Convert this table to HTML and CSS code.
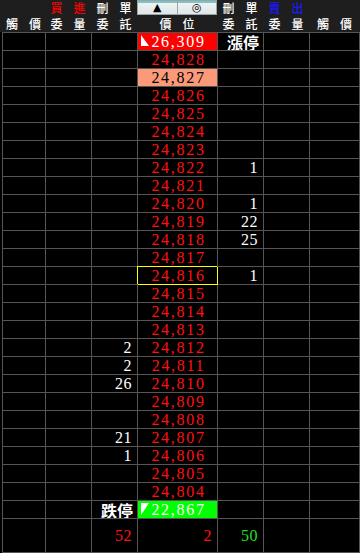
FILE: index.html
```html
<!DOCTYPE html>
<html lang="zh-Hant">
<head>
<meta charset="utf-8">
<title>五檔報價</title>
<link rel="stylesheet" href="styles.css">
</head>
<body>
<div class="screen">
  <div class="head">
    <div class="h"></div>
    <div class="h red"><span>買</span><span>進</span></div>
    <div class="h"><span>刪</span><span>單</span></div>
    <div class="h btns"><span class="btn">▲</span><span class="btn">◎</span></div>
    <div class="h"><span>刪</span><span>單</span></div>
    <div class="h blue"><span>賣</span><span>出</span></div>
    <div class="h"></div>
    <div class="h"><span>觸</span><span>價</span></div>
    <div class="h"><span>委</span><span>量</span></div>
    <div class="h"><span>委</span><span>託</span></div>
    <div class="h"><span>價</span><span>位</span></div>
    <div class="h"><span>委</span><span>託</span></div>
    <div class="h"><span>委</span><span>量</span></div>
    <div class="h"><span>觸</span><span>價</span></div>
  </div>
  <div class="book">
    <div class="row"><span class="c"></span><span class="c"></span><span class="c"></span><span class="c p up"><svg class="tri" width="8" height="11" viewBox="0 0 8 11"><polygon points="0,0 0,11 8,11" fill="#fff"/></svg>26,309</span><span class="c lim">漲停</span><span class="c"></span><span class="c"></span></div>
    <div class="row"><span class="c"></span><span class="c"></span><span class="c"></span><span class="c p">24,828</span><span class="c"></span><span class="c"></span><span class="c"></span></div>
    <div class="row"><span class="c"></span><span class="c"></span><span class="c"></span><span class="c p ref">24,827</span><span class="c"></span><span class="c"></span><span class="c"></span></div>
    <div class="row"><span class="c"></span><span class="c"></span><span class="c"></span><span class="c p">24,826</span><span class="c"></span><span class="c"></span><span class="c"></span></div>
    <div class="row"><span class="c"></span><span class="c"></span><span class="c"></span><span class="c p">24,825</span><span class="c"></span><span class="c"></span><span class="c"></span></div>
    <div class="row"><span class="c"></span><span class="c"></span><span class="c"></span><span class="c p">24,824</span><span class="c"></span><span class="c"></span><span class="c"></span></div>
    <div class="row"><span class="c"></span><span class="c"></span><span class="c"></span><span class="c p">24,823</span><span class="c"></span><span class="c"></span><span class="c"></span></div>
    <div class="row"><span class="c"></span><span class="c"></span><span class="c"></span><span class="c p">24,822</span><span class="c">1</span><span class="c"></span><span class="c"></span></div>
    <div class="row"><span class="c"></span><span class="c"></span><span class="c"></span><span class="c p">24,821</span><span class="c"></span><span class="c"></span><span class="c"></span></div>
    <div class="row"><span class="c"></span><span class="c"></span><span class="c"></span><span class="c p">24,820</span><span class="c">1</span><span class="c"></span><span class="c"></span></div>
    <div class="row"><span class="c"></span><span class="c"></span><span class="c"></span><span class="c p">24,819</span><span class="c">22</span><span class="c"></span><span class="c"></span></div>
    <div class="row"><span class="c"></span><span class="c"></span><span class="c"></span><span class="c p">24,818</span><span class="c">25</span><span class="c"></span><span class="c"></span></div>
    <div class="row"><span class="c"></span><span class="c"></span><span class="c"></span><span class="c p">24,817</span><span class="c"></span><span class="c"></span><span class="c"></span></div>
    <div class="row"><span class="c"></span><span class="c"></span><span class="c"></span><span class="c p cur">24,816</span><span class="c">1</span><span class="c"></span><span class="c"></span></div>
    <div class="row"><span class="c"></span><span class="c"></span><span class="c"></span><span class="c p">24,815</span><span class="c"></span><span class="c"></span><span class="c"></span></div>
    <div class="row"><span class="c"></span><span class="c"></span><span class="c"></span><span class="c p">24,814</span><span class="c"></span><span class="c"></span><span class="c"></span></div>
    <div class="row"><span class="c"></span><span class="c"></span><span class="c"></span><span class="c p">24,813</span><span class="c"></span><span class="c"></span><span class="c"></span></div>
    <div class="row"><span class="c"></span><span class="c"></span><span class="c">2</span><span class="c p">24,812</span><span class="c"></span><span class="c"></span><span class="c"></span></div>
    <div class="row"><span class="c"></span><span class="c"></span><span class="c">2</span><span class="c p">24,811</span><span class="c"></span><span class="c"></span><span class="c"></span></div>
    <div class="row"><span class="c"></span><span class="c"></span><span class="c">26</span><span class="c p">24,810</span><span class="c"></span><span class="c"></span><span class="c"></span></div>
    <div class="row"><span class="c"></span><span class="c"></span><span class="c"></span><span class="c p">24,809</span><span class="c"></span><span class="c"></span><span class="c"></span></div>
    <div class="row"><span class="c"></span><span class="c"></span><span class="c"></span><span class="c p">24,808</span><span class="c"></span><span class="c"></span><span class="c"></span></div>
    <div class="row"><span class="c"></span><span class="c"></span><span class="c">21</span><span class="c p">24,807</span><span class="c"></span><span class="c"></span><span class="c"></span></div>
    <div class="row"><span class="c"></span><span class="c"></span><span class="c">1</span><span class="c p">24,806</span><span class="c"></span><span class="c"></span><span class="c"></span></div>
    <div class="row"><span class="c"></span><span class="c"></span><span class="c"></span><span class="c p">24,805</span><span class="c"></span><span class="c"></span><span class="c"></span></div>
    <div class="row"><span class="c"></span><span class="c"></span><span class="c"></span><span class="c p">24,804</span><span class="c"></span><span class="c"></span><span class="c"></span></div>
    <div class="row"><span class="c"></span><span class="c"></span><span class="c lim">跌停</span><span class="c p down"><svg class="tri" width="8" height="12" viewBox="0 0 8 12"><polygon points="0,0 8,0 0,12" fill="#fff"/></svg>22,867</span><span class="c"></span><span class="c"></span><span class="c"></span></div>
    <div class="row total"><span class="c"></span><span class="c"></span><span class="c tred">52</span><span class="c tnum tred">2</span><span class="c tgreen">50</span><span class="c"></span><span class="c"></span></div>
  </div>
</div>
</body>
</html>
```
FILE: styles.css
```css
html, body {
  margin: 0;
  padding: 0;
  background: #000;
}
.screen {
  width: 360px;
  height: 553px;
  overflow: hidden;
  background: #000;
}
.head {
  height: 32px;
  background: #1e1e1e;
  display: grid;
  grid-template-columns: 2px 43px 46px 46px 80px 46px 46px 51px;
  grid-template-rows: 16px 16px;
  font-family: "Noto Sans CJK TC", "Noto Sans CJK SC", sans-serif;
  font-size: 12px;
  font-weight: 500;
  line-height: 12px;
  color: #fff;
}
.head::before {
  content: "";
  grid-row: 1 / 3;
  grid-column: 1;
}
.h {
  display: flex;
  justify-content: center;
  align-items: center;
  gap: 11px;
}
.h.red { color: #ff0000; }
.h.blue { color: #1a1aff; }
.btns {
  gap: 0;
  align-items: flex-start;
  height: 15px;
}
.btn {
  flex: 1;
  height: 13px;
  border: 1px solid #9aa4a8;
  background: linear-gradient(#7fc4c4 0, #7fc4c4 2px, #eef2f2 2px, #dfe6e8 100%);
  color: #000;
  font-family: "DejaVu Sans", sans-serif;
  font-size: 11px;
  line-height: 14px;
  text-align: center;
}
.btn + .btn { border-left: none; }
.book {
  margin-left: 2px;
  width: 358px;
}
.row {
  display: grid;
  grid-template-columns: 43px 46px 46px 80px 46px 46px 51px;
  height: 18px;
}
.row.total {
  height: 35px;
}
.c {
  display: flex;
  align-items: center;
  justify-content: flex-end;
  padding-right: 5px;
  border-left: 1px solid #555;
  border-top: 1px solid #555;
  color: #fff;
  font-family: "Liberation Serif", "Times New Roman", serif;
  font-size: 16px;
  letter-spacing: 0.5px;
  line-height: 17px;
  overflow: hidden;
}
.c:last-child {
  border-right: 1px solid #555;
}
.total .c {
  border-bottom: 1px solid #555;
}
.p {
  position: relative;
  justify-content: center;
  padding: 0 0 0 2px;
  color: #ff1010;
  letter-spacing: 1.7px;
}
.p.up {
  background: #ff0000;
  color: #fff;
}
.p.ref {
  background: #fa9a78;
  color: #000;
}
.p.down {
  background: #00ff00;
  color: #fff;
}
.p.cur {
  z-index: 1;
  border-left-color: #ffff00;
  border-top-color: #ffff00;
  box-shadow: 1px 1px 0 #ffff00;
  overflow: visible;
}
.tri {
  position: absolute;
  left: 3px;
  top: 2px;
}
.lim {
  font-family: "Noto Sans CJK TC", "Noto Sans CJK SC", sans-serif;
  font-weight: bold;
  font-size: 16px;
  line-height: 16px;
  letter-spacing: 0;
  padding-right: 4px;
  overflow: visible;
}
.tnum {
  justify-content: flex-end;
  padding-right: 5px;
  letter-spacing: 0.5px;
}
.tred { color: #ff1010; }
.tgreen { color: #20e020; }
```
